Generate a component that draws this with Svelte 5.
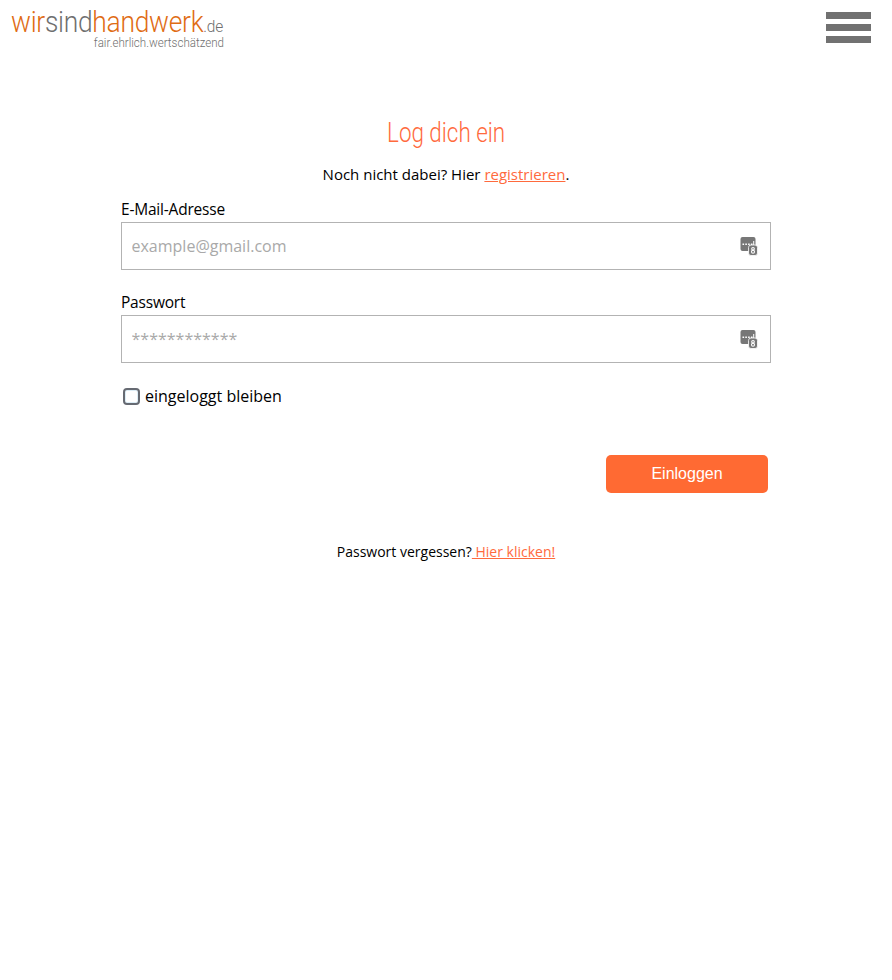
<script>
  const fields = [
    { label: 'E-Mail-Adresse', type: 'email', placeholder: 'example@gmail.com' },
    { label: 'Passwort', type: 'password', placeholder: '************' }
  ];
</script>

<div class="page">
  <header class="top">
    <a class="logo" href="#/">
      <span class="logo-main"><span class="or">wir</span><span class="gr">sind</span><span class="or">handwerk</span><span class="gr de">.de</span></span>
      <span class="logo-sub">fair.ehrlich.wertschätzend</span>
    </a>
    <button class="burger" aria-label="Menü"><span></span><span></span><span></span></button>
  </header>

  <main class="main">
    <h1><span>Log dich ein</span></h1>
    <p class="intro">Noch nicht dabei? Hier <a href="#/">registrieren</a>.</p>

    {#each fields as f}
      <div class="field">
        <label for={f.type}>{f.label}</label>
        <div class="box">
          <input id={f.type} type="text" placeholder={f.placeholder} />
          <svg class="key" width="18" height="20" viewBox="0 0 18 20" aria-hidden="true">
            <rect x="0.500" y="1" width="15" height="14" rx="2" fill="#777" />
            <path d="M2.500 7.500h1.600v1.600H2.500zM5.300 7.500h1.600v1.600H5.300zM8.100 7.500h1.600v1.600H8.100zM10.900 7.500h1.600v1.600h-1.600zM13.200 5h1v4.100h-1z" fill="#fff" />
            <rect x="8.500" y="9" width="9" height="10.500" rx="2.500" fill="#777" stroke="#fff" stroke-width="0.800" />
            <circle cx="13" cy="12.800" r="1.300" fill="none" stroke="#fff" stroke-width="1.100" />
            <circle cx="13" cy="15.800" r="1.500" fill="none" stroke="#fff" stroke-width="1.100" />
          </svg>
        </div>
      </div>
    {/each}

    <label class="remember">
      <input type="checkbox" />
      <span>eingeloggt bleiben</span>
    </label>

    <div class="actions">
      <button class="submit">Einloggen</button>
    </div>

    <p class="forgot">Passwort vergessen?<a href="#/">&nbsp;Hier klicken!</a></p>
  </main>
</div>

<style>
  :global(body) {
    margin: 0;
    background: #fff;
    font-family: "Open Sans", "Liberation Sans", sans-serif;
    color: #000;
  }
  .page {
    height: 980px;
    overflow: hidden;
  }
  .top {
    display: flex;
    justify-content: space-between;
    align-items: flex-start;
    padding: 11px 21px 0 11px;
    height: 50px;
    box-sizing: border-box;
  }
  .logo {
    display: block;
    width: 213px;
    text-decoration: none;
    font-family: Roboto, sans-serif;
    font-weight: 300;
  }
  .logo-main {
    display: block;
    font-size: 29px;
    line-height: 22px;
    letter-spacing: -0.3px;
    white-space: nowrap;
    transform: scaleX(0.91);
    transform-origin: left center;
  }
  .or { color: #e06c14; }
  .gr { color: #6f6f6f; }
  .de { font-size: 17px; letter-spacing: -0.2px; }
  .logo-sub {
    display: block;
    font-size: 13px;
    line-height: 11px;
    font-weight: 300;
    color: #6f6f6f;
    text-align: right;
    white-space: nowrap;
    transform: scaleX(0.89);
    transform-origin: right center;
  }
  .burger {
    display: flex;
    flex-direction: column;
    gap: 5px;
    width: 45px;
    padding: 1px 0 0;
    border: 0;
    background: none;
  }
  .burger span {
    display: block;
    height: 7px;
    background: #717171;
  }
  .main {
    width: 650px;
    margin: 0 auto;
    padding-top: 65px;
  }
  h1 {
    margin: 0;
    text-align: center;
    font-family: Roboto, sans-serif;
    font-weight: 300;
    font-size: 27px;
    line-height: 36px;
    color: #ff6a3d;
  }
  h1 span {
    display: inline-block;
    transform: scaleX(0.83);
  }
  .intro {
    margin: 13px 0 0;
    text-align: center;
    font-size: 15px;
    line-height: 20px;
  }
  .intro a, .forgot a {
    color: #ff6a3d;
    text-decoration: underline;
  }
  .field + .field {
    margin-top: 22px;
  }
  .intro + .field {
    margin-top: 15px;
  }
  .field label {
    display: block;
    font-size: 15.500px;
    line-height: 20px;
    letter-spacing: -0.2px;
    margin-bottom: 3px;
  }
  .box {
    display: flex;
    align-items: center;
    height: 48px;
    box-sizing: border-box;
    border: 1px solid #b3b3b3;
    padding: 0 12px 0 9.500px;
  }
  .box input {
    flex: 1;
    min-width: 0;
    border: 0;
    outline: 0;
    padding: 0;
    font: 16px "Open Sans", sans-serif;
    color: #333;
    background: none;
  }
  .box input::placeholder {
    color: #a9a9a9;
    opacity: 1;
  }
  .key {
    flex: none;
  }
  .remember {
    display: flex;
    align-items: center;
    gap: 5px;
    margin-top: 22px;
    font-size: 16px;
    line-height: 22px;
  }
  .remember input {
    appearance: none;
    width: 17px;
    height: 17px;
    box-sizing: border-box;
    margin: 0 0 0 2px;
    border: 2px solid #666a72;
    border-radius: 4px;
    background: #fff;
    box-shadow: 0 0 0 1px #dcedf6 inset;
  }
  .actions {
    display: flex;
    justify-content: flex-end;
    margin-top: 48px;
    padding-right: 3px;
  }
  .submit {
    width: 162px;
    height: 38px;
    border: 0;
    border-radius: 5px;
    background: #ff6a33;
    color: #fff;
    font: 16px "Liberation Sans", Arial, sans-serif;
  }
  .forgot {
    margin: 49px 0 0;
    text-align: center;
    font-size: 14px;
    line-height: 20px;
  }
</style>
